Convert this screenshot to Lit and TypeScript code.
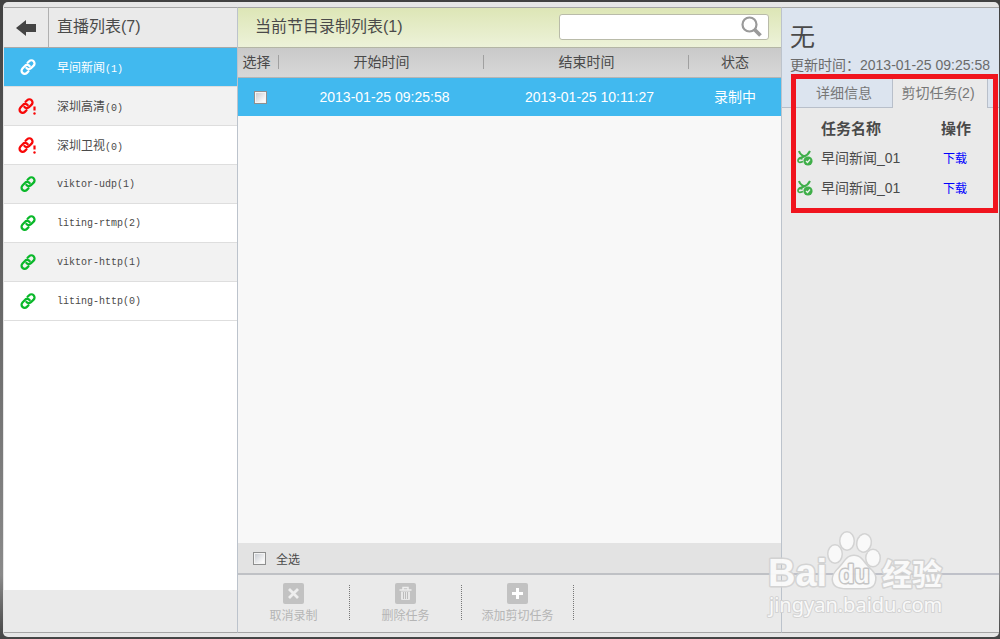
import { LitElement, html, css, svg } from "lit";
import { customElement, property, state } from "lit/decorators.js";

type LinkState = "active" | "error" | "ok";

interface Channel {
  name: string;
  count: number;
  status: LinkState;
}

const channels: Channel[] = [
  { name: "早间新闻", count: 1, status: "active" },
  { name: "深圳高清", count: 0, status: "error" },
  { name: "深圳卫视", count: 0, status: "error" },
  { name: "viktor-udp", count: 1, status: "ok" },
  { name: "liting-rtmp", count: 2, status: "ok" },
  { name: "viktor-http", count: 1, status: "ok" },
  { name: "liting-http", count: 0, status: "ok" },
];

const records = [
  { start: "2013-01-25 09:25:58", end: "2013-01-25 10:11:27", status: "录制中" },
];

const tasks = ["早间新闻_01", "早间新闻_01"];

const actions = [
  { label: "取消录制", icon: "cancel" },
  { label: "删除任务", icon: "trash" },
  { label: "添加剪切任务", icon: "add" },
];

const base = css`
  :host {
    display: flex;
    flex-direction: column;
    box-sizing: border-box;
    min-width: 0;
    font-family: "Liberation Sans", "Noto Sans CJK SC", sans-serif;
    font-size: 14px;
    color: #4a4a4a;
  }
  *,
  *::before {
    box-sizing: border-box;
  }
  h1,
  h2,
  ul,
  p {
    margin: 0;
    padding: 0;
    font-weight: 400;
    list-style: none;
  }
  button {
    margin: 0;
    padding: 0;
    border: 0;
    background: none;
    font: inherit;
    color: inherit;
  }
  svg {
    display: block;
  }
  table {
    width: 100%;
    table-layout: fixed;
    border-spacing: 0;
  }
  th,
  td {
    padding: 0;
    font-weight: 400;
    line-height: 20px;
  }
  .check {
    appearance: none;
    display: block;
    width: 13px;
    height: 13px;
    margin: 0;
    border: 1px solid #8e8f8f;
    background: linear-gradient(135deg, #c4c8ce, #fafafa 80%);
    box-shadow: inset 0 0 0 1px #f4f4f4;
  }
`;

@customElement("link-icon")
class LinkIcon extends LitElement {
  @property() status: LinkState = "ok";

  static styles = css`
    :host {
      display: block;
      width: 22px;
      height: 18px;
    }
    svg {
      display: block;
    }
    .active {
      color: #fff;
    }
    .error {
      color: #f80808;
    }
    .ok {
      color: #0ab82a;
    }
  `;

  render() {
    const x = this.status === "error" ? 1 : 3;
    return html`<svg class=${this.status} width="22" height="18" viewBox="0 0 22 18" fill="none" stroke="currentColor" stroke-linecap="round" aria-hidden="true">
      <g transform="translate(${x} 1) scale(0.67)" stroke-width="3.4">
        <path d="M9.500 13.200a4.600 4.600 0 0 0 7.200.3l3.600-3.600a4.600 4.600 0 0 0-6.600-6.600l-2.400 2.400" />
        <path d="M14.500 10.800a4.600 4.600 0 0 0-7.200-.3l-3.600 3.600a4.600 4.600 0 0 0 6.600 6.600l2.400-2.400" />
      </g>
      ${this.status === "error"
        ? svg`<path d="M17.500 9.500v4" stroke-width="2.200" stroke-linecap="butt"/><circle cx="17.500" cy="16.500" r="1.200" fill="currentColor" stroke="none"/>`
        : ""}
    </svg>`;
  }
}

@customElement("channel-list")
class ChannelList extends LitElement {
  static styles = [
    base,
    css`
      .head {
        display: flex;
        height: 40px;
        border-bottom: 1px solid #a9a9a9;
        background: #eaeaea;
      }
      .back {
        display: grid;
        place-items: center;
        width: 45px;
        border-right: 1px solid #b0b0b0;
      }
      h2 {
        padding-left: 8px;
        font-size: 16px;
        line-height: 38px;
      }
      ul {
        flex: 1;
        background: #fff;
      }
      .item {
        display: flex;
        align-items: center;
        width: 100%;
        height: 39px;
        padding-left: 13px;
        gap: 18px;
        border-bottom: 1px solid #dedede;
        font-family: "Liberation Mono", "Noto Sans CJK SC", monospace;
        font-size: 12px;
        text-align: left;
      }
      .latin {
        font-size: 10px;
      }
      .even .item {
        background: #f2f2f2;
      }
      .active .item {
        background: #41b9ef;
        color: #fff;
      }
      .foot {
        height: 42px;
        background: #eaeaea;
      }
    `,
  ];

  render() {
    return html`
      <div class="head">
        <button class="back" aria-label="返回">
          <svg width="20" height="16" viewBox="0 0 20 16" fill="#444"><path d="M0 8 10 0v4h10v8H10v4z" /></svg>
        </button>
        <h2>直播列表(${channels.length})</h2>
      </div>
      <ul>
        ${channels.map(
          (c, i) => html`<li class="${c.status === "active" ? "active" : i % 2 ? "even" : ""}">
            <button class="item">
              <link-icon .status=${c.status}></link-icon>
              <span>${c.status === "ok" ? html`<span class="latin">${c.name}</span>` : c.name}<span class="latin">(${c.count})</span></span>
            </button>
          </li>`
        )}
      </ul>
      <div class="foot"></div>
    `;
  }
}

@customElement("record-panel")
class RecordPanel extends LitElement {
  static styles = [
    base,
    css`
      .head {
        display: flex;
        align-items: center;
        justify-content: space-between;
        height: 40px;
        padding: 0 12px 2px 17px;
        border-bottom: 1px solid #b4b6a5;
        background: linear-gradient(#dde6b6, #edf2d9);
      }
      h2 {
        font-size: 16px;
        line-height: 37px;
      }
      .search {
        display: flex;
        align-items: center;
        width: 210px;
        height: 26px;
        padding-right: 6px;
        border: 1px solid #b9bba9;
        border-radius: 3px;
        background: #fff;
      }
      .search input {
        flex: 1;
        min-width: 0;
        border: 0;
        outline: 0;
        background: none;
        font: inherit;
      }
      .body {
        flex: 1;
        background: #f8f8f8;
      }
      .pick {
        width: 41px;
      }
      .status {
        width: 92px;
      }
      th {
        height: 30px;
        padding-bottom: 2px;
        border-bottom: 1px solid #b5b5b5;
        background: linear-gradient(#a0a0a0, #a0a0a0) right 7px / 1px 14px no-repeat, linear-gradient(#c9c9c9, #d8d8d8);
      }
      th:first-child {
        padding-right: 4px;
      }
      th:last-child {
        background: linear-gradient(#c9c9c9, #d8d8d8);
      }
      td {
        height: 38px;
        background: #41b9ef;
        color: #fff;
        text-align: center;
      }
      td .check {
        margin-left: 16px;
      }
      .time {
        padding-left: 6px;
      }
      .all {
        display: flex;
        align-items: center;
        height: 30px;
        padding-left: 15px;
        gap: 10px;
        background: #e3e3e3;
        font-size: 12px;
      }
      .tools {
        display: flex;
        height: 59px;
        padding-top: 8px;
        border-top: 2px solid #bfc1c5;
        background: #eaeaea;
      }
      .tools li {
        display: flex;
        width: 112px;
        justify-content: center;
      }
      .tools li::after {
        content: "";
        height: 35px;
        margin-top: 2px;
        border-right: 1px dotted #777;
      }
      .tools button {
        display: flex;
        flex: 1;
        flex-direction: column;
        align-items: center;
        gap: 3px;
        color: #b5b5b5;
        font-size: 12px;
        line-height: 18px;
      }
    `,
  ];

  private glyph(name: string) {
    if (name === "cancel") return svg`<path d="m6 6 9 9m0-9-9 9" stroke="#eee" stroke-width="2.8"/>`;
    if (name === "add") return svg`<path d="M10.500 5v11M5 10.500h11" stroke="#fff" stroke-width="3"/>`;
    return svg`<path d="M4.500 7h12M8 6.500v-2h5v2" stroke="#eee" stroke-width="1.500"/><path d="M6 8.500h9V16q0 1-1 1H7q-1 0-1-1z" fill="#e8e8e8"/><path d="M8.500 9v7m2-7v7m2-7v7" stroke="#bdbdbd"/>`;
  }

  render() {
    return html`
      <div class="head">
        <h2>当前节目录制列表(${records.length})</h2>
        <label class="search">
          <input type="text" aria-label="搜索" />
          <svg width="21" height="21" viewBox="0 0 21 21" fill="none" stroke="#9a9a9a"><circle cx="8.500" cy="8.500" r="7" stroke-width="2.200" /><path d="m13.500 13.500 6 6" stroke-width="3.800" /></svg>
        </label>
      </div>
      <div class="body">
        <table>
          <thead>
            <tr><th class="pick">选择</th><th>开始时间</th><th>结束时间</th><th class="status">状态</th></tr>
          </thead>
          <tbody>
            ${records.map(
              (r) => html`<tr>
                <td><input class="check" type="checkbox" aria-label="选择" /></td>
                <td class="time">${r.start}</td>
                <td class="time">${r.end}</td>
                <td>${r.status}</td>
              </tr>`
            )}
          </tbody>
        </table>
      </div>
      <label class="all"><input class="check" type="checkbox" />全选</label>
      <ul class="tools">
        ${actions.map(
          (a) => html`<li><button>
            <svg width="21" height="21" viewBox="0 0 21 21" fill="none"><rect width="21" height="21" rx="2" fill="#c2c2c2" />${this.glyph(a.icon)}</svg>
            ${a.label}
          </button></li>`
        )}
      </ul>
    `;
  }
}

@customElement("detail-panel")
class DetailPanel extends LitElement {
  @state() private tab = 1;

  static styles = [
    base,
    css`
      .info {
        padding: 12px 0 0 8px;
        background: #dce4ef;
        white-space: nowrap;
      }
      h1 {
        font-size: 25px;
        line-height: 34px;
      }
      .info p {
        color: #6b6b6b;
        line-height: 22px;
      }
      .tabs {
        display: flex;
        height: 32px;
        padding-top: 2px;
        background: #dce4ef;
        color: #777;
      }
      .tabs button {
        width: 110px;
        padding: 0 0 1px 14px;
        border-bottom: 1px solid #b8bfca;
      }
      .tabs .on {
        width: 96px;
        padding: 0 4px 4px 0;
        border: 1px solid #b8bfca;
        border-bottom: 0;
        background: #eaeaea;
      }
      .tabs::after {
        content: "";
        flex: 1;
        border-bottom: 1px solid #b8bfca;
      }
      .content {
        flex: 1;
        padding-top: 6px;
        background: #eaeaea;
      }
      th,
      td {
        height: 30px;
      }
      td {
        padding-bottom: 2px;
      }
      th {
        font-size: 15px;
        font-weight: 700;
        text-align: left;
      }
      .icon {
        width: 39px;
      }
      .icon svg {
        margin-left: 15px;
      }
      .op {
        width: 58px;
      }
      td.op {
        padding-left: 2px;
      }
      a {
        color: #00f;
        font-size: 12px;
        text-decoration: none;
      }
      .foot {
        height: 59px;
        border-top: 2px solid #bfc1c9;
        background: #eaeaea;
      }
    `,
  ];

  render() {
    return html`
      <div class="info">
        <h1>无</h1>
        <p>更新时间：2013-01-25 09:25:58</p>
      </div>
      <div class="tabs">
        ${["详细信息", `剪切任务(${tasks.length})`].map(
          (t, i) => html`<button class=${this.tab === i ? "on" : ""} @click=${() => (this.tab = i)}>${t}</button>`
        )}
      </div>
      <div class="content">
        <table>
          <thead>
            <tr><th class="icon"></th><th>任务名称</th><th class="op">操作</th></tr>
          </thead>
          <tbody>
            ${tasks.map(
              (t) => html`<tr>
                <td class="icon"><svg width="16" height="16" viewBox="0 0 16 16" fill="none" stroke="#3fae49" stroke-width="2">
                  <path d="M2 1Q3 5 8 6.500M13 1Q11 5 7 6.500L2 8.500" /><path d="M5.500 9Q1 7.500 1 10.500T6 11.500" stroke-width="1.700" />
                  <circle cx="11" cy="11" r="4.600" fill="#3fae49" stroke="none" /><path d="m9 11 1.500 1.500 2.500-3" stroke="#eaf5ea" stroke-width="1.200" />
                </svg></td>
                <td>${t}</td>
                <td class="op"><a href="#">下载</a></td>
              </tr>`
            )}
          </tbody>
        </table>
      </div>
      <div class="foot"></div>
    `;
  }
}

@customElement("app-root")
class AppRoot extends LitElement {
  static styles = css`
    :host {
      display: flex;
      box-sizing: border-box;
      min-height: 100vh;
      padding: 2px 1px 2px 3px;
      background: linear-gradient(#414141, #8a8a8a 90%, #444);
    }
    .window {
      position: relative;
      display: grid;
      flex: 1;
      grid-template-columns: 234px minmax(0, 1fr) 217px;
      padding: 5px 0 4px 1px;
      border-radius: 5px;
      background: #e6e6e6;
      overflow: hidden;
    }
    channel-list,
    record-panel {
      border-right: 1px solid #bcc3cc;
    }
    channel-list,
    record-panel,
    detail-panel {
      border-top: 1px solid #a5a5a5;
      border-bottom: 1px solid #a5a5a5;
    }
    .mark {
      position: absolute;
      top: 72px;
      right: 1px;
      width: 207px;
      height: 139px;
      box-sizing: border-box;
      border: 5px solid #f0141e;
      pointer-events: none;
    }
    .logo {
      position: absolute;
      right: 49px;
      bottom: 15px;
      pointer-events: none;
    }
  `;

  render() {
    return html`
      <div class="window">
        <channel-list></channel-list>
        <record-panel></record-panel>
        <detail-panel></detail-panel>
        <div class="mark"></div>
        <svg class="logo" width="184" height="92" viewBox="0 0 184 92" fill="#fafafa" stroke="#d2d2d2" stroke-width="3" paint-order="stroke" stroke-linejoin="round" opacity="0.950">
          <text x="2" y="56" font-family="Liberation Sans, sans-serif" font-size="38" font-weight="700">Bai</text>
          <ellipse cx="69" cy="24" rx="6.500" ry="8.500" />
          <ellipse cx="81" cy="11" rx="6.500" ry="8.500" />
          <ellipse cx="98" cy="13" rx="6.500" ry="8.500" transform="rotate(12 98 13)" />
          <ellipse cx="107" cy="28" rx="6.500" ry="8" />
          <path d="M88 26c6 0 8 4 12 9 5 6 10 8 9 15-1 8-7 8-13 8H80c-7 0-13-2-13-9 0-6 5-9 9-14 4-5 6-9 12-9z" />
          <text x="73" y="53" font-family="Liberation Sans, sans-serif" font-size="25" font-weight="700" stroke="#c4c4c4">du</text>
          <text x="116" y="55" font-family="Noto Sans CJK SC, sans-serif" font-size="30" font-weight="700">经验</text>
          <text x="3" y="82" font-family="Noto Sans, sans-serif" font-size="20" stroke-width="2">jingyan.baidu.com</text>
        </svg>
      </div>
    `;
  }
}
